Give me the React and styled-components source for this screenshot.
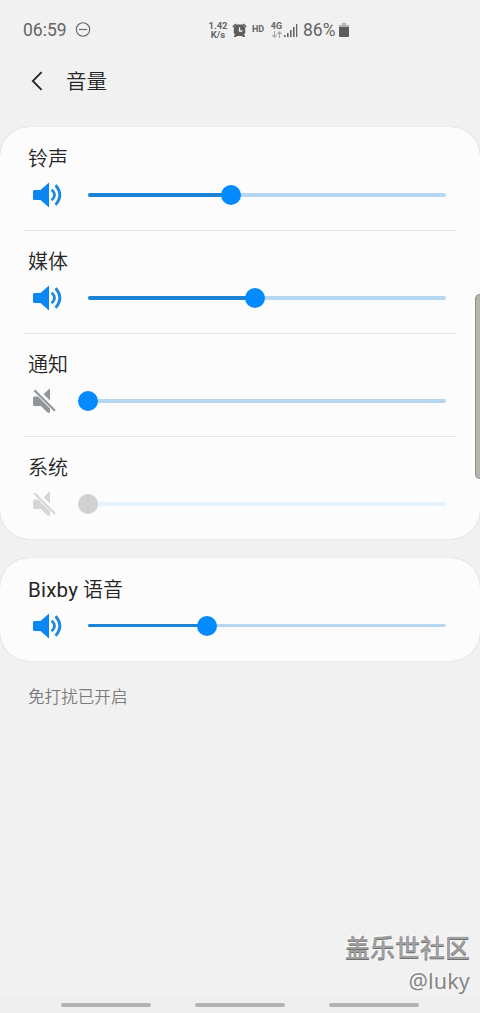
import styled, { createGlobalStyle } from 'styled-components';

const sliders = [
  { label: '铃声', value: 143, state: 'on' },
  { label: '媒体', value: 167, state: 'on' },
  { label: '通知', value: 0, state: 'muted' },
  { label: '系统', value: 0, state: 'disabled' },
];

const TRACK = 358;

function Speaker() {
  return (
    <svg width="30" height="26" viewBox="0 0 30 26">
      <path d="M1.5 8H7.5L16 0.5V25.5L7.5 18H1.5Q0 18 0 16.5V9.5Q0 8 1.5 8Z" fill="#0a86f5" />
      <path d="M18.6 7.8Q24.6 13 18.6 18.2" fill="none" stroke="#1d88e0" strokeWidth="2.7" />
      <path d="M22.6 3.2Q31 13 22.6 22.8" fill="none" stroke="#1d88e0" strokeWidth="2.9" />
    </svg>
  );
}

function MutedSpeaker({ color }) {
  return (
    <svg width="30" height="26" viewBox="0 0 30 26">
      <path d="M1.5 8.5H5L17 20.4V25L14.5 24.4L8 18H1.5Q0 18 0 16.5V10Q0 8.5 1.5 8.5Z" fill={color} />
      <path d="M17 1V12.6L10.6 6.2L16 1Z" fill={color} />
      <path d="M1.4 2.2L22 22.8" stroke={color} strokeWidth="2.2" />
    </svg>
  );
}

function VolumeRow({ label, value, state, thin }) {
  const disabled = state === 'disabled';
  return (
    <Row>
      <Label>{label}</Label>
      <Control>
        <IconBox>
          {state === 'on' ? <Speaker /> : <MutedSpeaker color={disabled ? '#d4d6d7' : '#909698'} />}
        </IconBox>
        <Track $disabled={disabled} $thin={thin}>
          <Fill style={{ width: value }} />
          <Thumb $disabled={disabled} style={{ left: `${(value / TRACK) * 100}%` }} />
        </Track>
      </Control>
    </Row>
  );
}

export default function App() {
  return (
    <Screen>
      <GlobalStyle />
      <StatusBar>
        <Clock>06:59</Clock>
        <svg width="16" height="16" viewBox="0 0 16 16" fill="none" stroke="#656565" strokeWidth="1.1">
          <circle cx="8" cy="7.5" r="6.7" />
          <path d="M4 7.5H12" />
        </svg>
        <StatusIcons>
          <Speed>
            <span>1.42</span>
            <span>K/s</span>
          </Speed>
          <svg width="15" height="15" viewBox="0 0 15 15">
            <path d="M4.5 1.5H10.5L13.2 4.5V10L12 11.5L13 13V14H11L9.8 13H5.2L4 14H2V13L3 11.5L1.8 10V4.5Z" fill="#5c5c5c" />
            <path d="M0.8 4L3.8 1M14.2 4L11.2 1" stroke="#5c5c5c" strokeWidth="1.6" />
            <path d="M7.5 4.3V8H10.4" fill="none" stroke="#f1f1f1" strokeWidth="1.3" />
          </svg>
          <Hd>HD</Hd>
          <Network>
            <span>4G</span>
            <svg width="10" height="7" viewBox="0 0 10 7" fill="none" stroke="#a5a5a5" strokeWidth="1.1">
              <path d="M2.5 0V6M0.3 4L2.5 6.2L4.7 4M7.5 7V1M5.3 3L7.5 0.8L9.7 3" />
            </svg>
          </Network>
          <svg width="14" height="13" viewBox="0 0 14 13" fill="#646464">
            <path d="M0 11H1.6V13H0ZM3 9H4.6V13H3ZM6 6H7.6V13H6ZM9 3H10.6V13H9ZM12 0H13.3V13H12Z" />
          </svg>
          <Percent>86%</Percent>
          <svg width="10" height="14" viewBox="0 0 10 14">
            <path d="M3 0H7V2H10V4H0V2H3Z" fill="#b3b3b3" />
            <path d="M0 4H10V13Q10 14 9 14H1Q0 14 0 13Z" fill="#5e5e5e" />
          </svg>
        </StatusIcons>
      </StatusBar>
      <Header>
        <svg width="12" height="20" viewBox="0 0 12 20" fill="none" stroke="#252525" strokeWidth="1.8">
          <path d="M10.6 1.2L1.8 10L10.6 18.8" />
        </svg>
        <Title>音量</Title>
      </Header>
      <Card>
        {sliders.map((item) => (
          <VolumeRow key={item.label} {...item} />
        ))}
      </Card>
      <Card>
        <VolumeRow label={<><Latin>Bixby</Latin> 语音</>} value={119} state="on" thin />
      </Card>
      <Note>免打扰已开启</Note>
      <Watermark>
        <Community>盖乐世社区</Community>
        <User>@luky</User>
      </Watermark>
      <NavBar>
        <NavHandle />
        <NavHandle />
        <NavHandle />
      </NavBar>
      <EdgeHandle />
    </Screen>
  );
}

const GlobalStyle = createGlobalStyle`
  * {
    box-sizing: border-box;
  }
  body {
    margin: 0;
    background: #f1f1f1;
  }
  svg {
    display: block;
    flex-shrink: 0;
  }
`

const Screen = styled.div`
  position: relative;
  display: flex;
  flex-direction: column;
  width: 480px;
  height: 1013px;
  overflow: hidden;
  background: #f1f1f1;
  color: #252525;
  font-family: Roboto, 'Noto Sans CJK SC', sans-serif;
`

const StatusBar = styled.div`
  display: flex;
  align-items: center;
  height: 60px;
  padding-left: 23px;
  color: #656565;
`

const Clock = styled.span`
  width: 52px;
  font-size: 17.5px;
  line-height: 20px;
`

const StatusIcons = styled.div`
  display: flex;
  align-items: center;
  margin-left: 117px;
`

const Speed = styled.div`
  display: flex;
  flex-direction: column;
  align-items: center;
  width: 20px;
  margin-right: 4px;
  font-size: 9.5px;
  font-weight: 700;
  line-height: 9px;
`

const Hd = styled.span`
  width: 13px;
  margin: -2px 6px 0 5px;
  font-size: 9px;
  font-weight: 700;
  line-height: 10px;
`

const Network = styled.div`
  display: flex;
  flex-direction: column;
  align-items: center;
  width: 11px;
  margin-right: 2px;
  font-size: 9px;
  font-weight: 700;
  line-height: 9px;
`

const Percent = styled.span`
  width: 36px;
  margin-left: 5px;
  font-size: 17.5px;
  line-height: 20px;
`

const Header = styled.header`
  display: flex;
  align-items: center;
  gap: 23px;
  height: 42px;
  margin-bottom: 25px;
  padding-left: 31px;
`

const Title = styled.h1`
  margin: 2px 0 0;
  font-size: 20.5px;
  font-weight: 350;
  line-height: 28px;
`

const Card = styled.section`
  flex-shrink: 0;
  margin-bottom: 19px;
  border-radius: 29px;
  background: #fcfcfc;
  box-shadow: 0 0 1px #b5b5b5;
`

const Row = styled.div`
  display: flex;
  flex-direction: column;
  height: 103px;
  margin: 0 23px;
  padding: 19px 11px 0 5px;
  border-top: 1px solid #e4e4e4;

  &:first-child {
    border-top-color: transparent;
  }
`

const Label = styled.div`
  font-size: 20px;
  font-weight: 350;
  line-height: 24px;
  white-space: nowrap;
`

const Latin = styled.span`
  font-size: 20.5px;
  font-weight: 400;
  letter-spacing: 0.2px;
`

const Control = styled.div`
  display: flex;
  align-items: center;
  height: 26px;
  margin-top: 11px;
`

const IconBox = styled.div`
  width: 60px;
  padding-left: 5px;
`

const Track = styled.div`
  position: relative;
  width: ${TRACK}px;
  height: ${(props) => (props.$thin ? '3px' : '4px')};
  margin-bottom: ${(props) => (props.$thin ? '1px' : '0')};
  border-radius: 2px;
  background: ${(props) => (props.$disabled ? '#e8f2fa' : '#b7d7f1')};
`

const Fill = styled.div`
  height: 100%;
  border-radius: 2px;
  background: #1d83d4;
`

const Thumb = styled.div`
  position: absolute;
  top: -8px;
  width: 20px;
  height: 20px;
  margin-left: -10px;
  border-radius: 50%;
  background: ${(props) => (props.$disabled ? '#d1d1d1' : '#038aff')};
`

const Note = styled.p`
  margin: 6px 0 0 28px;
  color: #7b7b7b;
  font-size: 16.6px;
  font-weight: 350;
  line-height: 24px;
`

const Watermark = styled.div`
  display: flex;
  flex-direction: column;
  align-items: flex-end;
  margin-top: auto;
  padding-right: 10px;
`

const Community = styled.span`
  color: #a0a0a0;
  font-size: 25px;
  font-weight: 500;
  line-height: 34px;
  text-shadow: 0 1px 0 #707070, -1px -1px 0 #fff;
`

const User = styled.span`
  color: #858585;
  font-family: 'Noto Sans', sans-serif;
  font-size: 21.5px;
  letter-spacing: 0.2px;
  line-height: 30px;
  text-shadow: -1px -1px 0 #fff;
`

const NavBar = styled.nav`
  display: flex;
  flex-shrink: 0;
  justify-content: center;
  gap: 44px;
  height: 17px;
  padding-top: 7px;
  background: #efefef;
`

const NavHandle = styled.div`
  width: 90px;
  height: 4px;
  border-radius: 2px;
  background: #b3b3b3;
`

const EdgeHandle = styled.div`
  position: absolute;
  top: 294px;
  right: 0;
  width: 5px;
  height: 185px;
  border: 1px solid #8f8d8a;
  border-right: none;
  border-radius: 5px 0 0 5px;
  background: #b7b3ad;
`
